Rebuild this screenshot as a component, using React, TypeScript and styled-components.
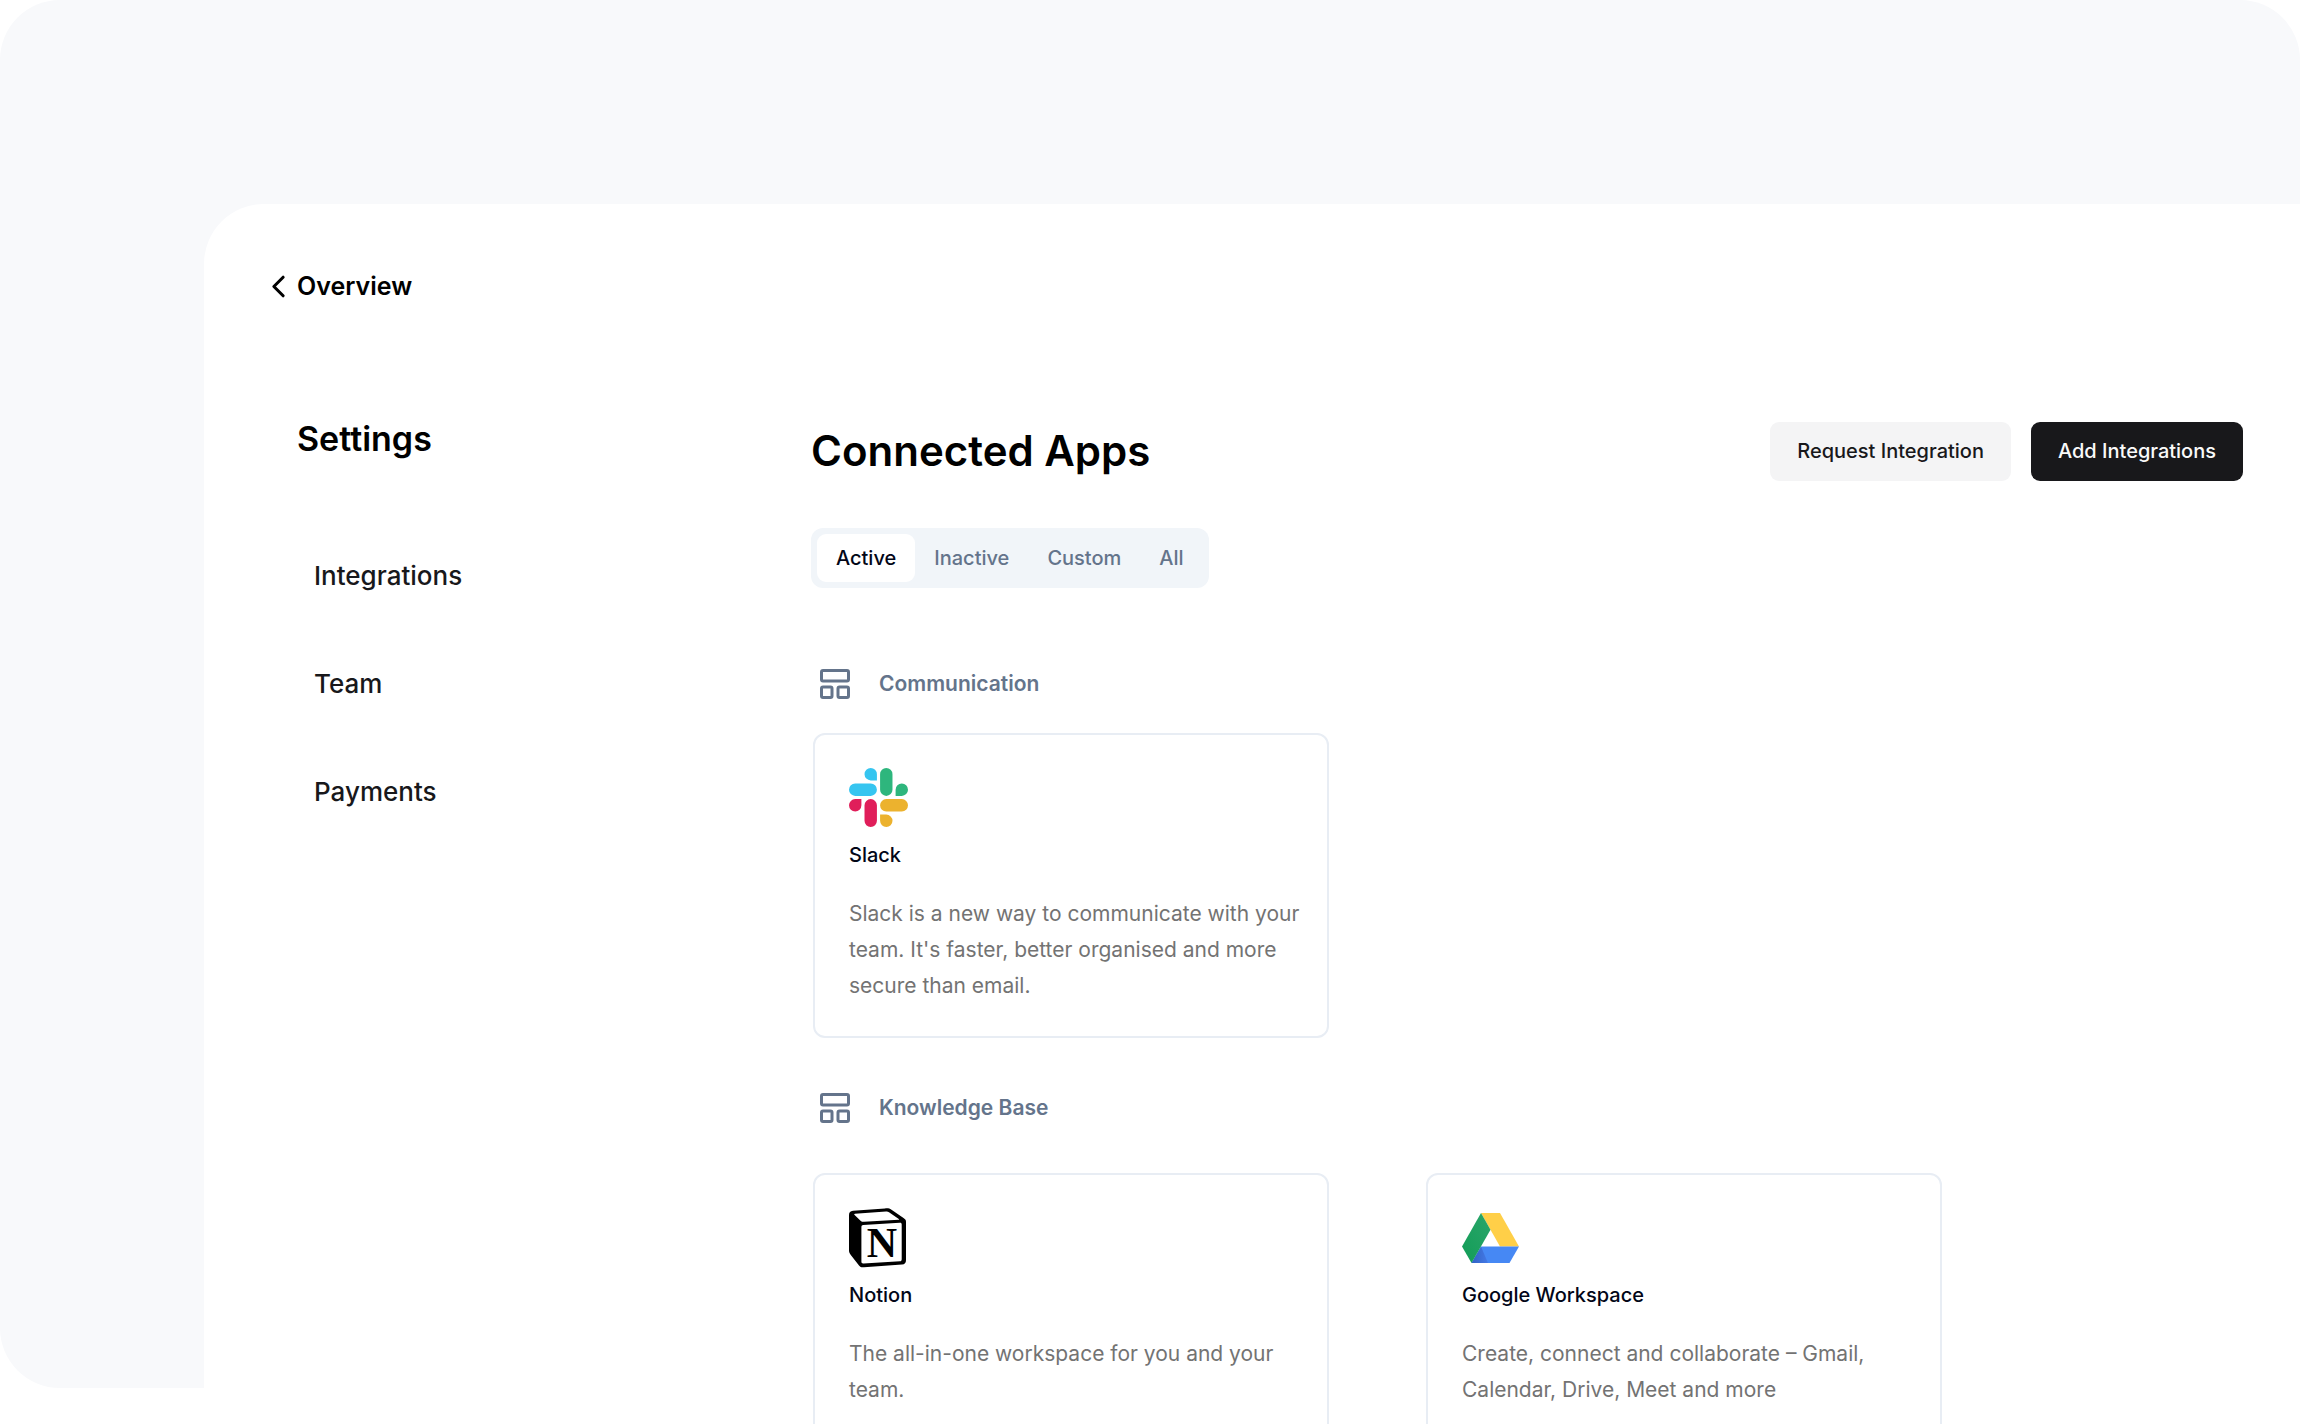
import React, { useState } from "react";
import styled, { createGlobalStyle } from "styled-components";
import { ChevronLeft, LayoutPanelTop } from "lucide-react";

const GlobalStyle = createGlobalStyle`
  *, *::before, *::after { box-sizing: border-box; }
  body {
    margin: 0;
    background: #ffffff;
    color: #020617;
    font-family: Inter, "Liberation Sans", sans-serif;
  }
  h1, h2, h3, p, ul { margin: 0; padding: 0; }
  a { color: inherit; text-decoration: none; }
  button { border: 0; font: inherit; cursor: pointer; }
`;

const Page = styled.div`
  display: grid;
  grid-template-rows: minmax(0, 1fr);
  height: 100vh;
  overflow: hidden;
`;

const Backdrop = styled.div`
  grid-area: 1 / 1;
  margin: 0 8px 36px 0;
  border-radius: 60px;
  background: #f8f9fb;
`;

const Panel = styled.div`
  grid-area: 1 / 1;
  min-width: 0;
  margin: 204px 0 0 204px;
  padding: 60px 65px 0 56px;
  border-top-left-radius: 60px;
  background: #ffffff;
`;

const BackLink = styled.a`
  display: inline-flex;
  align-items: center;
  height: 44px;
  color: #000000;
  font-size: 25px;
  font-weight: 600;
`;

const Columns = styled.div`
  display: grid;
  grid-template-columns: 551px minmax(0, 1fr);
  margin-top: 106px;
`;

const Sidebar = styled.aside`
  padding-left: 37px;
`;

const SidebarTitle = styled.h2`
  color: #000000;
  font-size: 34px;
  font-weight: 600;
  line-height: 48px;
`;

const NavList = styled.ul`
  display: flex;
  flex-direction: column;
  gap: 72px;
  margin-top: 95px;
  padding-left: 17px;
  list-style: none;
`;

const NavLink = styled.a`
  display: block;
  color: #18181b;
  font-size: 26px;
  font-weight: 450;
  line-height: 36px;
`;

const Main = styled.main`
  min-width: 0;
`;

const Header = styled.header`
  display: flex;
  align-items: center;
  justify-content: space-between;
  margin-top: 7px;
`;

const Title = styled.h1`
  color: #000000;
  font-size: 42px;
  font-weight: 600;
  line-height: 58px;
`;

const Actions = styled.div`
  display: flex;
  gap: 20px;
`;

const Button = styled.button<{ $primary?: boolean }>`
  height: 59px;
  padding: 0 27px;
  border-radius: 9px;
  background: ${(p) => (p.$primary ? "#18181b" : "#f4f4f5")};
  color: ${(p) => (p.$primary ? "#fafafa" : "#18181b")};
  font-size: 20px;
  font-weight: 500;
`;

const Tabs = styled.div`
  display: inline-flex;
  margin-top: 47px;
  padding: 6px;
  border-radius: 12px;
  background: #f1f5f9;
`;

const Tab = styled.button<{ $active: boolean }>`
  height: 48px;
  padding: 0 19px;
  border-radius: 9px;
  background: ${(p) => (p.$active ? "#ffffff" : "transparent")};
  color: ${(p) => (p.$active ? "#020617" : "#64748b")};
  font-size: 20px;
  font-weight: 500;
`;

const Section = styled.section<{ $space: number; $gap: number }>`
  display: flex;
  flex-direction: column;
  gap: ${(p) => p.$gap}px;
  margin-top: ${(p) => p.$space}px;
  padding-left: 2px;
`;

const SectionHeading = styled.h2`
  display: flex;
  align-items: center;
  gap: 26px;
  padding-left: 4px;
  color: #64748b;
  font-size: 21px;
  font-weight: 600;
  line-height: 36px;
`;

const CardGrid = styled.div`
  display: flex;
  gap: 97px;
`;

const Card = styled.article`
  width: 516px;
  min-height: 304px;
  padding: 32px 24px 32px 34px;
  border: 2px solid #e8edf4;
  border-radius: 12px;
`;

const CardLogo = styled.div`
  display: flex;
  align-items: center;
  height: 62px;
`;

const CardTitle = styled.h3`
  margin-top: 8px;
  color: #020617;
  font-size: 20px;
  font-weight: 500;
  line-height: 36px;
`;

const CardText = styled.p`
  margin-top: 23px;
  color: #737373;
  font-size: 21px;
  line-height: 36px;
`;

const SlackLogo = () => (
  <svg width="59" height="59" viewBox="0 0 24 24" aria-hidden="true">
    <path fill="#36c5f0" d="M8.834 5.042a2.528 2.528 0 0 1-2.521-2.52A2.528 2.528 0 0 1 8.834 0a2.528 2.528 0 0 1 2.521 2.522v2.52H8.834zm0 1.271a2.528 2.528 0 0 1 2.521 2.521 2.528 2.528 0 0 1-2.521 2.521H2.522A2.528 2.528 0 0 1 0 8.834a2.528 2.528 0 0 1 2.522-2.521h6.312z" />
    <path fill="#2eb67d" d="M18.956 8.834a2.528 2.528 0 0 1 2.522-2.521A2.528 2.528 0 0 1 24 8.834a2.528 2.528 0 0 1-2.522 2.521h-2.522V8.834zm-1.268 0a2.528 2.528 0 0 1-2.523 2.521 2.527 2.527 0 0 1-2.52-2.521V2.522A2.527 2.527 0 0 1 15.165 0a2.528 2.528 0 0 1 2.523 2.522v6.312z" />
    <path fill="#ecb22e" d="M15.165 18.956a2.528 2.528 0 0 1 2.523 2.522A2.528 2.528 0 0 1 15.165 24a2.527 2.527 0 0 1-2.52-2.522v-2.522h2.52zm0-1.268a2.527 2.527 0 0 1-2.52-2.523 2.526 2.526 0 0 1 2.52-2.52h6.313A2.527 2.527 0 0 1 24 15.165a2.528 2.528 0 0 1-2.522 2.523h-6.313z" />
    <path fill="#e01e5a" d="M5.042 15.165a2.528 2.528 0 0 1-2.52 2.523A2.528 2.528 0 0 1 0 15.165a2.527 2.527 0 0 1 2.522-2.52h2.52v2.52zm1.271 0a2.527 2.527 0 0 1 2.521-2.52 2.527 2.527 0 0 1 2.521 2.52v6.313A2.528 2.528 0 0 1 8.834 24a2.528 2.528 0 0 1-2.521-2.522v-6.313z" />
  </svg>
);

const CubeLetter = styled.text`
  font-family: "Liberation Serif", serif;
  font-size: 42px;
  font-weight: 700;
`;

const NotionLogo = () => (
  <svg width="57" height="60" viewBox="0 0 57 60" aria-hidden="true">
    <path d="M4 2.800 36 .4c3-.2 4.500 0 6.500 1.400l12 8.200c2 1.400 2.500 2.200 2.500 4v38c0 3-1.300 4.400-4 4.600l-38 2.600c-2.500.2-3.800-.2-5-1.800L1.800 47C.6 45.400 0 44.200 0 42.500V7c0-2.600 1.300-4 4-4.200Z" />
    <path fill="#ffffff" d="m6 5.800 31-2.200c1.300-.1 2 0 3 .7l9.800 6.700c.6.400.4.700-.3.800l-34.500 2c-1.400.1-2.200-.1-3.200-.9L5.600 7c-.7-.6-.5-1.100.4-1.200Z" />
    <path fill="#ffffff" d="m14.300 17 36.500-2.200c1.300-.1 1.900.4 1.900 1.600v34.800c0 1.300-.5 2-1.800 2.100l-36.400 2.100c-1.400.1-2.100-.4-2.100-1.700V19c0-1.300.6-1.900 1.900-2Z" />
    <CubeLetter x="33" y="49" textAnchor="middle">
      N
    </CubeLetter>
  </svg>
);

const DriveLogo = () => (
  <svg width="57" height="50" viewBox="0 0 57 50" aria-hidden="true">
    <defs>
      <linearGradient id="drive-fold" x1="0" y1="0" x2="1" y2="0">
        <stop offset="0" stopColor="#3262c4" />
        <stop offset="1" stopColor="#4379e6" />
      </linearGradient>
      <linearGradient id="drive-green" x1="1" y1="0" x2="0" y2="1">
        <stop offset="0" stopColor="#2ba56a" />
        <stop offset="1" stopColor="#129d57" />
      </linearGradient>
    </defs>
    <path fill="#ffcf48" d="M19 0h19l19 33.4H38z" />
    <path fill="#4688f4" d="M19 33.4h38L47.5 50h-38z" />
    <path fill="url(#drive-fold)" d="M19 33.4 26 50H9.5z" />
    <path fill="url(#drive-green)" d="M19 0l9.500 16.700L9.500 50 0 33.400z" />
  </svg>
);

type AppInfo = { name: string; text: string; logo: React.ReactNode };

const communication: AppInfo[] = [
  {
    name: "Slack",
    text: "Slack is a new way to communicate with your team. It's faster, better organised and more secure than email.",
    logo: <SlackLogo />,
  },
];

const knowledgeBase: AppInfo[] = [
  {
    name: "Notion",
    text: "The all-in-one workspace for you and your team.",
    logo: <NotionLogo />,
  },
  {
    name: "Google Workspace",
    text: "Create, connect and collaborate – Gmail, Calendar, Drive, Meet and more",
    logo: <DriveLogo />,
  },
];

const tabs = ["Active", "Inactive", "Custom", "All"];
const navItems = ["Integrations", "Team", "Payments"];

type AppSectionProps = { title: string; apps: AppInfo[]; space: number; gap: number };

const AppSection = ({ title, apps, space, gap }: AppSectionProps) => (
  <Section $space={space} $gap={gap}>
    <SectionHeading>
      <LayoutPanelTop size={36} aria-hidden="true" />
      {title}
    </SectionHeading>
    <CardGrid>
      {apps.map((app) => (
        <Card key={app.name}>
          <CardLogo>{app.logo}</CardLogo>
          <CardTitle>{app.name}</CardTitle>
          <CardText>{app.text}</CardText>
        </Card>
      ))}
    </CardGrid>
  </Section>
);

export default function App() {
  const [active, setActive] = useState("Active");

  return (
    <>
      <GlobalStyle />
      <Page>
        <Backdrop />
        <Panel>
          <BackLink href="#overview">
            <ChevronLeft size={37} aria-hidden="true" />
            Overview
          </BackLink>
          <Columns>
            <Sidebar>
              <SidebarTitle>Settings</SidebarTitle>
              <nav aria-label="Settings">
                <NavList>
                  {navItems.map((item) => (
                    <li key={item}>
                      <NavLink href={`#${item.toLowerCase()}`}>{item}</NavLink>
                    </li>
                  ))}
                </NavList>
              </nav>
            </Sidebar>
            <Main>
              <Header>
                <Title>Connected Apps</Title>
                <Actions>
                  <Button type="button">Request Integration</Button>
                  <Button type="button" $primary>
                    Add Integrations
                  </Button>
                </Actions>
              </Header>
              <Tabs role="tablist">
                {tabs.map((tab) => (
                  <Tab
                    key={tab}
                    type="button"
                    role="tab"
                    aria-selected={tab === active}
                    $active={tab === active}
                    onClick={() => setActive(tab)}
                  >
                    {tab}
                  </Tab>
                ))}
              </Tabs>
              <AppSection title="Communication" apps={communication} space={78} gap={31} />
              <AppSection title="Knowledge Base" apps={knowledgeBase} space={52} gap={47} />
            </Main>
          </Columns>
        </Panel>
      </Page>
    </>
  );
}
